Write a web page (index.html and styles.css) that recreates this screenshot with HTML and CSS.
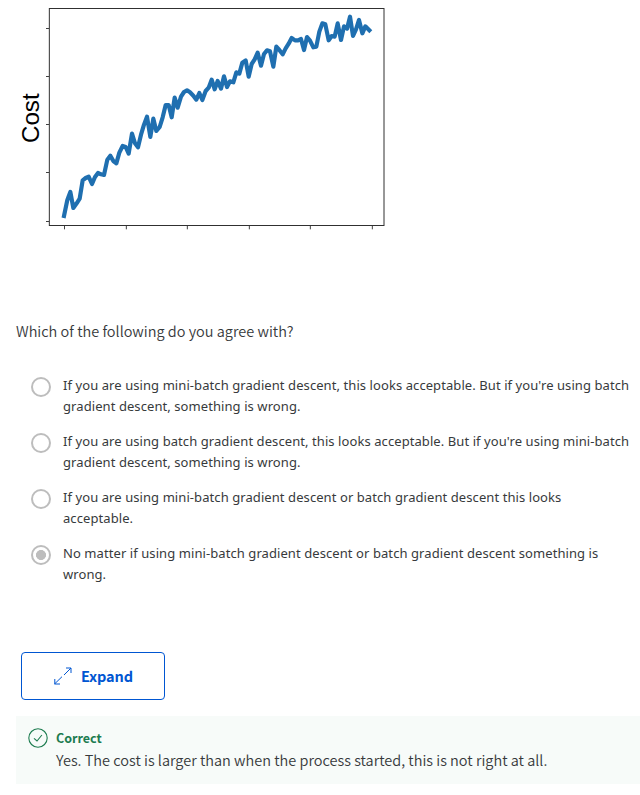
FILE: index.html
```html
<!DOCTYPE html>
<html lang="en">
<head>
<meta charset="utf-8">
<title>Quiz question</title>
<link rel="stylesheet" href="styles.css">
</head>
<body>
<main class="quiz">
  <svg class="chart" viewBox="0 0 1200 720" role="img" aria-label="Cost curve">
    <rect class="frame" x="148" y="25.5" width="1004" height="651"/>
    <path class="ticks" d="M138 85.5h9M138 229.5h9M138 373.5h9M138 517.5h9M138 664.5h9M193.5 678v10M379 678v10M562 678v10M748 678v10M931 678v10M1117 678v10"/>
    <text class="axis" transform="translate(118 429) rotate(-90)" textLength="149" lengthAdjust="spacingAndGlyphs">Cost</text>
    <polyline class="curve" points="192,648 202,600 211,576 220,624 230,610 239,596 248,541 257,534 266,530 276,552 285,531 294,519 303,523 312,525 322,479 331,467 340,483 349,490 358,458 368,438 377,441 386,461 396,401 405,430 414,442 423,404 432,374 441,350 451,411 460,356 469,393 479,381 488,352 497,315 506,315 515,352 524,293 533,323 543,290 552,276 561,271 570,277 580,287 589,299 598,279 607,300 617,273 626,263 635,239 644,268 653,243 663,266 672,229 681,261 690,244 700,247 709,217 718,221 727,188 737,181 746,230 755,192 764,178 773,158 783,197 792,162 801,151 810,154 820,200 829,140 838,150 848,163 857,145 866,131 875,114 885,121 894,121 903,117 912,150 921,111 930,122 940,142 949,140 958,95 967,70 976,73 986,121 995,108 1004,110 1013,70 1023,120 1032,79 1041,86 1050,50 1059,108 1068,88 1077,60 1087,100 1096,79 1108,91"/>
  </svg>
  <p class="question">Which of the following do you agree with?</p>
  <div class="options">
    <label class="option"><span class="radio"></span><span class="label">If you are using mini-batch gradient descent, this looks acceptable. But if you're using batch<br>gradient descent, something is wrong.</span></label>
    <label class="option"><span class="radio"></span><span class="label">If you are using batch gradient descent, this looks acceptable. But if you're using mini-batch<br>gradient descent, something is wrong.</span></label>
    <label class="option"><span class="radio"></span><span class="label">If you are using mini-batch gradient descent or batch gradient descent this looks<br>acceptable.</span></label>
    <label class="option"><span class="radio checked"></span><span class="label">No matter if using mini-batch gradient descent or batch gradient descent something is<br>wrong.</span></label>
  </div>
  <button class="expand" type="button">
    <svg class="arrows" viewBox="0 0 18 18"><path d="M.5 17L8 9.7M10 8L17 1M12 1H17V6M.8 12V17H6"/></svg>
    <span>Expand</span>
  </button>
  <section class="feedback">
    <svg class="check" viewBox="0 0 20 20"><circle cx="10" cy="10" r="9.2"/><path d="M6 10.3L9 13L13.9 7"/></svg>
    <div>
      <h2 class="verdict">Correct</h2>
      <p class="explain">Yes. The cost is larger than when the process started, this is not right at all.</p>
    </div>
  </section>
</main>
</body>
</html>
```
FILE: styles.css
```css
* { box-sizing: border-box; }
body {
  margin: 0;
  background: #fff;
  color: #373a3c;
  font-family: "Noto Sans CJK SC", sans-serif;
}
h2, p { margin: 0; }
.quiz { height: 795px; overflow: hidden; }
.chart { display: block; width: 400px; height: 240px; }
.frame { fill: none; stroke: #303030; stroke-width: 3; }
.ticks { fill: none; stroke: #404040; stroke-width: 3; }
.axis { font: 73px "Liberation Sans", sans-serif; fill: #000; }
.curve {
  fill: none;
  stroke: #1f6fb0;
  stroke-width: 12.5;
  stroke-linejoin: round;
  stroke-linecap: square;
}
.question {
  margin: 79px 0 0 16px;
  font-size: 14.5px;
  font-weight: 350;
  line-height: 24px;
  white-space: nowrap;
}
.options {
  display: flex;
  flex-direction: column;
  gap: 14px;
  margin: 32px 0 0 31px;
}
.option { display: flex; gap: 12px; height: 42px; }
.radio {
  flex: none;
  width: 20px;
  height: 20px;
  margin-top: 2px;
  border: 2px solid #bdbdbd;
  border-radius: 50%;
}
.checked { background: radial-gradient(circle, #bdbdbd 4.7px, transparent 5.3px); }
.label {
  font: 13px/21px "Noto Sans", sans-serif;
  letter-spacing: .078px;
  white-space: nowrap;
}
.expand {
  display: flex;
  align-items: center;
  width: 144px;
  height: 48px;
  margin: 67px 0 0 21px;
  padding: 0 0 0 32px;
  gap: 9px;
  border: 1px solid #0056d2;
  border-radius: 4px;
  background: #fff;
  color: #0056d2;
  font: 700 14.5px/20px "Noto Sans CJK SC", sans-serif;
  letter-spacing: -.15px;
}
.arrows { width: 18px; height: 18px; fill: none; stroke: #0056d2; stroke-width: 1; }
.feedback {
  display: flex;
  gap: 8px;
  height: 68px;
  margin: 16px 0 0 16px;
  padding: 12px;
  background: #f7fbf9;
}
.check { width: 20px; height: 20px; fill: none; stroke: #1d7c50; stroke-width: 1.1; }
.verdict { color: #1d7c50; font-size: 12.5px; line-height: 20px; }
.explain {
  color: #373a3c;
  font-size: 14.5px;
  font-weight: 350;
  line-height: 24px;
  white-space: nowrap;
}
```
